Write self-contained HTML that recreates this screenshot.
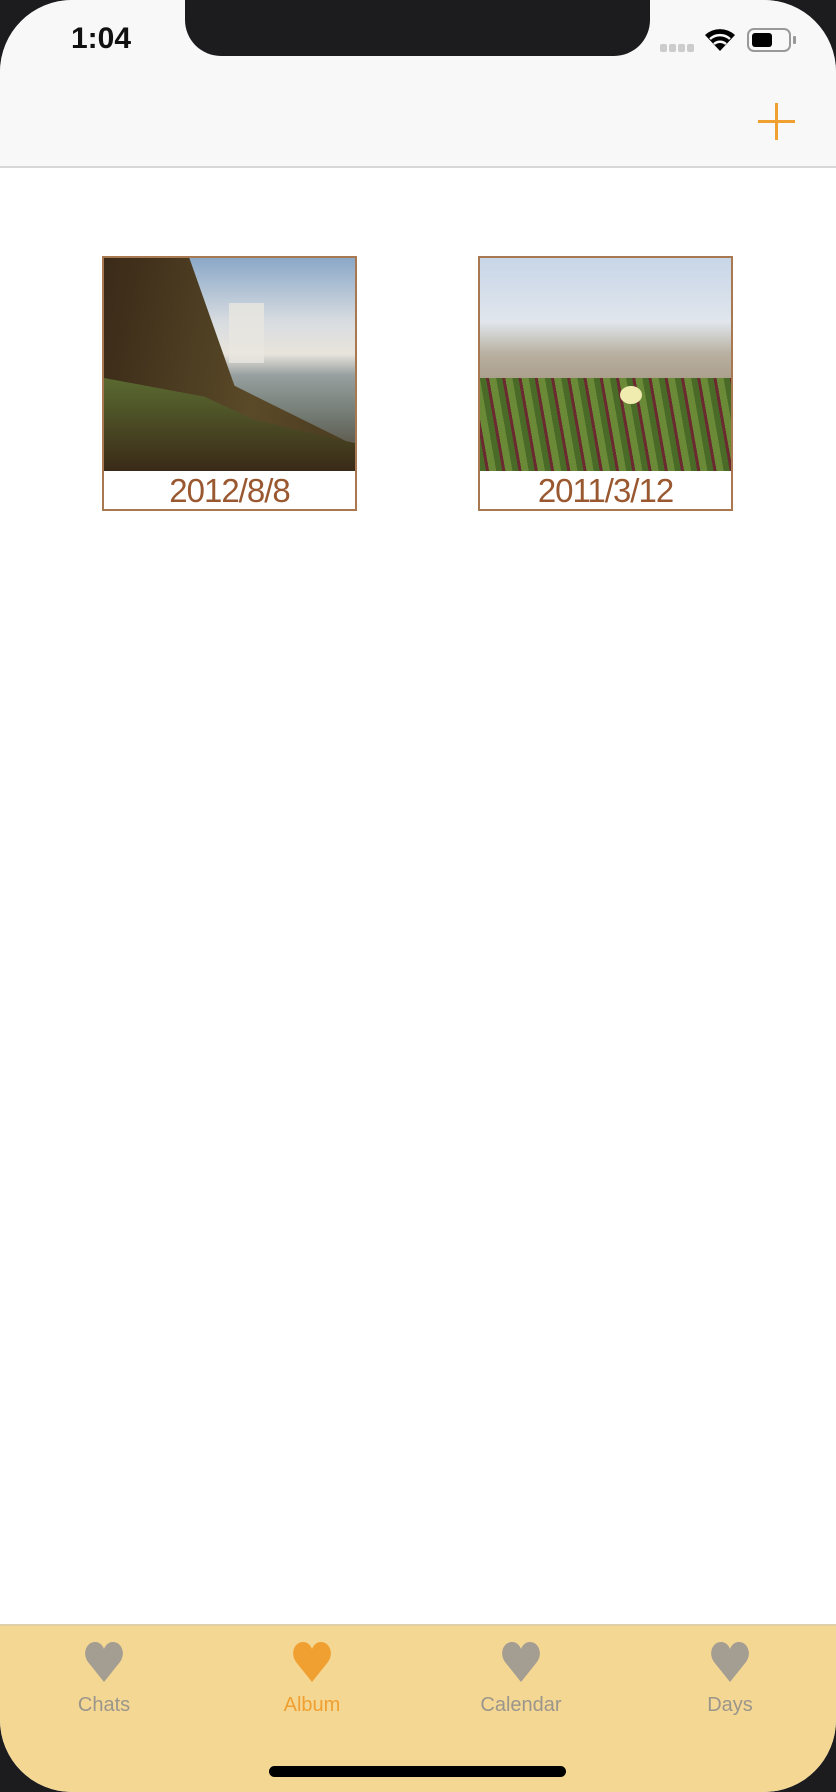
<!DOCTYPE html>
<html><head><meta charset="utf-8"><style>
*{margin:0;padding:0;box-sizing:border-box}
html,body{width:836px;height:1792px;background:#1c1c1e;overflow:hidden;font-family:"Liberation Sans",sans-serif}
.screen{position:absolute;left:0;top:0;width:836px;height:1792px;background:#fff;border-radius:72px;overflow:hidden}
.nav{position:absolute;left:0;top:0;width:836px;height:168px;background:#f8f8f8;border-bottom:2px solid #d8d8d8}
.notch{position:absolute;left:185px;top:-30px;width:465px;height:86px;background:#1c1c1e;border-radius:0 0 36px 36px}
.time{position:absolute;left:71px;top:22px;font-size:30px;font-weight:bold;color:#111}
.card{position:absolute;top:256px;width:255px;height:255px;border:2px solid #a87850;background:#fff}
.img{position:absolute;left:0;top:0;width:251px;height:213px;overflow:hidden}
.lbl{position:absolute;left:0;top:213px;width:251px;height:38px;text-align:center;font-size:33px;line-height:40px;color:#9a5830;letter-spacing:-1px}
.tab{position:absolute;left:0;top:1624px;width:836px;height:168px;background:#f5d794;border-top:2px solid #e0d0a8}
.ti{position:absolute;top:16px;width:120px;text-align:center;font-size:20px;color:#9a968c}
.ti svg{display:block;margin:0 auto 12px}
.home{position:absolute;left:269px;top:1766px;width:297px;height:11px;border-radius:6px;background:#000}
</style></head><body>
<div class="screen">
<div class="nav">
<div class="time">1:04</div>
<div style="position:absolute;left:660px;top:44px;width:34px;height:8px;display:flex;gap:2px"><i style="flex:1;background:#ccc;border-radius:2px"></i><i style="flex:1;background:#ccc;border-radius:2px"></i><i style="flex:1;background:#ccc;border-radius:2px"></i><i style="flex:1;background:#ccc;border-radius:2px"></i></div>
<svg style="position:absolute;left:703px;top:26px" width="34" height="26" viewBox="0 0 34 26"><path d="M17 25 L2 9 A22 22 0 0 1 32 9 Z" fill="#000"/><path d="M7 13 A15 15 0 0 1 27 13" stroke="#f8f8f8" stroke-width="2.5" fill="none"/><path d="M11 18 A9 9 0 0 1 23 18" stroke="#f8f8f8" stroke-width="2.5" fill="none"/></svg>
<div style="position:absolute;left:747px;top:28px;width:44px;height:24px;border:2px solid #999;border-radius:7px"><div style="position:absolute;left:3px;top:3px;width:20px;height:14px;background:#000;border-radius:3px"></div></div>
<div style="position:absolute;left:793px;top:36px;width:3px;height:8px;background:#999;border-radius:1px"></div>
<svg style="position:absolute;left:758px;top:103px" width="37" height="37"><path d="M18.5 0V37M0 18.5H37" stroke="#f0a030" stroke-width="3"/></svg>
</div>
<div class="notch"></div>

<div class="card" style="left:102px"><div class="img" style="background:linear-gradient(180deg,#8aa8c8 0%,#d8dce0 30%,#e8e4dc 45%,#98a0a0 55%,#707870 75%,#504030 100%)">
<div style="position:absolute;left:0;top:0;width:251px;height:213px;background:linear-gradient(100deg,#3a2a18,#5a4a28 60%,#4a3a20);clip-path:polygon(0 0,34% 0,46% 40%,52% 60%,100% 88%,100% 100%,0 100%)"></div>
<div style="position:absolute;left:0;top:120px;width:251px;height:93px;background:linear-gradient(180deg,#5a6a30,#3a2a18);clip-path:polygon(0 0,40% 20%,60% 45%,100% 70%,100% 100%,0 100%)"></div>
<div style="position:absolute;left:125px;top:45px;width:35px;height:60px;background:#e8e6e0;opacity:.8"></div>
</div><div class="lbl">2012/8/8</div></div>

<div class="card" style="left:478px"><div class="img" style="background:linear-gradient(180deg,#c8d6e8 0%,#e0e6ec 30%,#b8b0a0 45%,#a89a88 60%,#708040 72%,#4a6a28 100%)">
<div style="position:absolute;left:0;top:120px;width:251px;height:93px;background:repeating-linear-gradient(80deg,#4a6a28 0 6px,#6a2a30 6px 9px,#6a8a38 9px 16px)"></div>
<div style="position:absolute;left:140px;top:128px;width:22px;height:18px;border-radius:50%;background:#f0ecb0"></div>
</div><div class="lbl">2011/3/12</div></div>

<div class="tab">
<div class="ti" style="left:44px"><svg width="44" height="40" viewBox="0 0 44 40"><path d="M22 40 L6 20 C0 12 4 0 13 0 C18 0 21 4 22 7 C23 4 26 0 31 0 C40 0 44 12 38 20 Z" fill="#a39d92"/></svg>Chats</div>
<div class="ti" style="left:252px;color:#f0a030"><svg width="44" height="40" viewBox="0 0 44 40"><path d="M22 40 L6 20 C0 12 4 0 13 0 C18 0 21 4 22 7 C23 4 26 0 31 0 C40 0 44 12 38 20 Z" fill="#f0a030"/></svg>Album</div>
<div class="ti" style="left:461px"><svg width="44" height="40" viewBox="0 0 44 40"><path d="M22 40 L6 20 C0 12 4 0 13 0 C18 0 21 4 22 7 C23 4 26 0 31 0 C40 0 44 12 38 20 Z" fill="#a39d92"/></svg>Calendar</div>
<div class="ti" style="left:670px"><svg width="44" height="40" viewBox="0 0 44 40"><path d="M22 40 L6 20 C0 12 4 0 13 0 C18 0 21 4 22 7 C23 4 26 0 31 0 C40 0 44 12 38 20 Z" fill="#a39d92"/></svg>Days</div>
</div>
<div class="home"></div>
</div>
</body></html>
